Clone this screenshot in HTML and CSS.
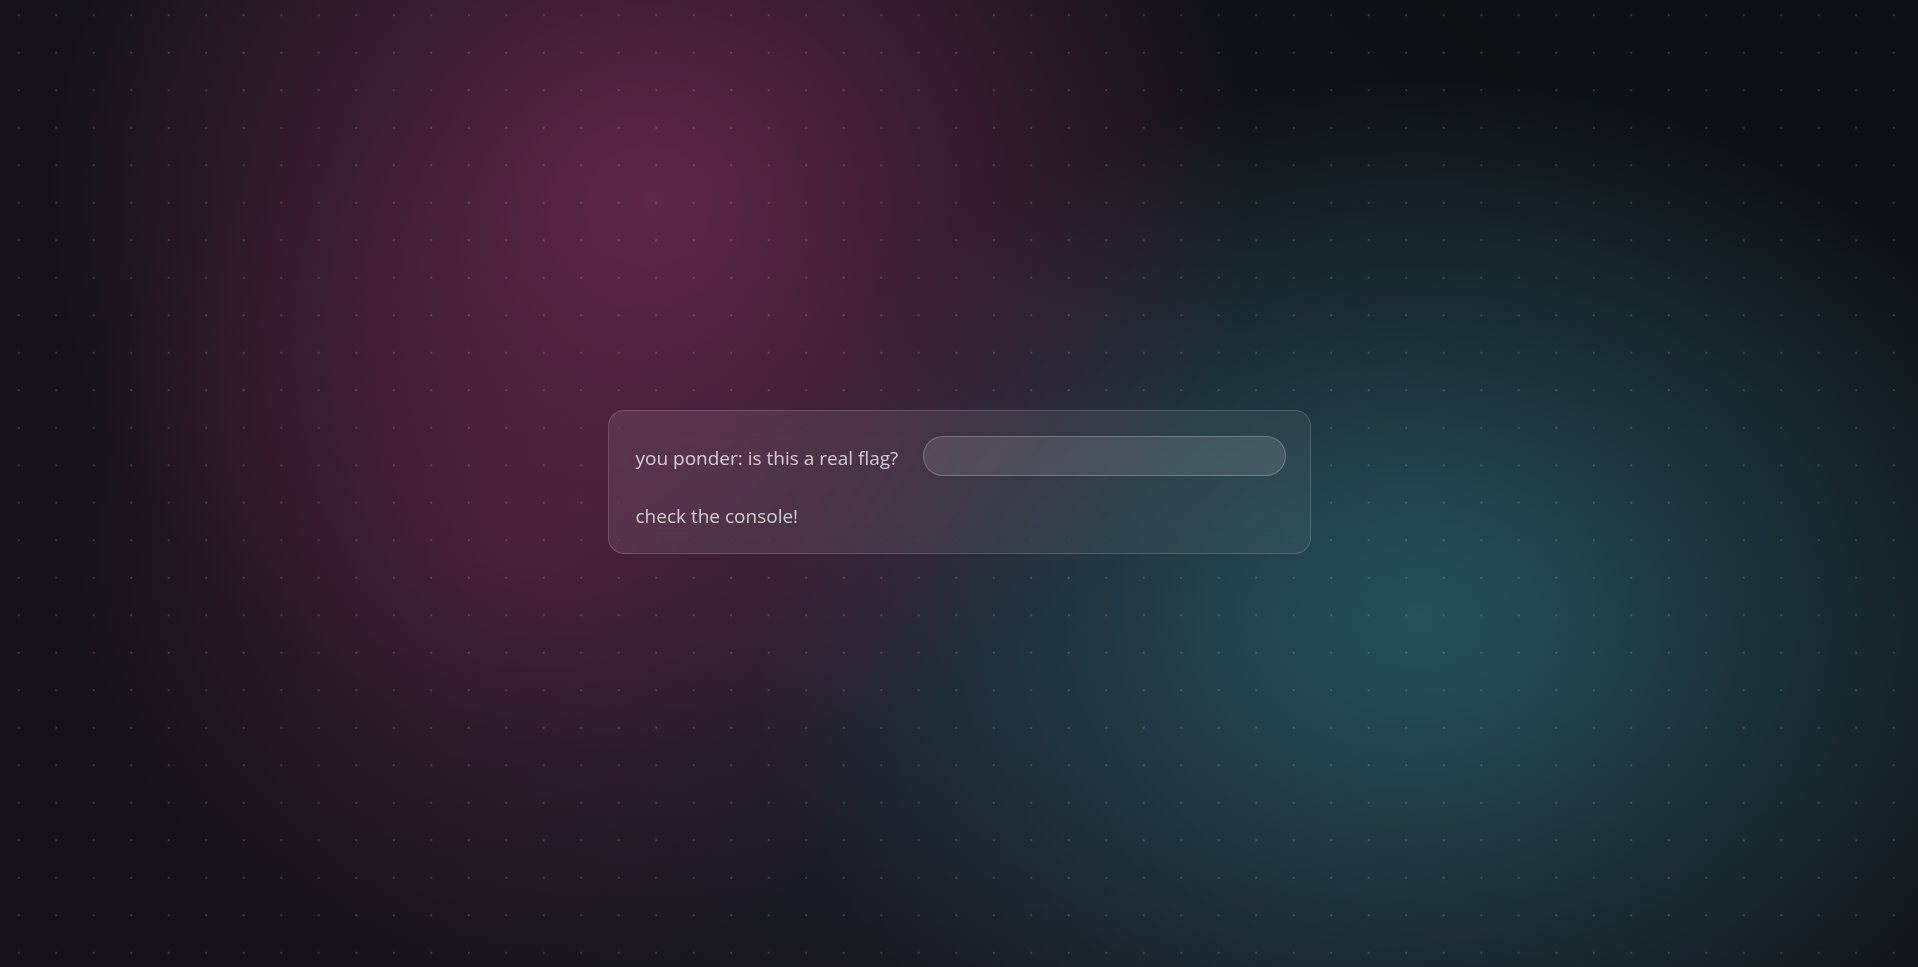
FILE: index.html
```html
<!DOCTYPE html>
<html lang="en">
<head>
<meta charset="utf-8">
<title>flag</title>
<link rel="stylesheet" href="styles.css">
</head>
<body>
<main class="card">
  <div class="row">
    <label class="prompt" for="flag">you ponder: is this a real flag?</label>
    <input class="flag-input" id="flag" type="text">
  </div>
  <p class="hint">check the console!</p>
</main>
</body>
</html>
```

FILE: styles.css
```css
html, body {
  margin: 0;
  padding: 0;
  height: 100%;
}

body {
  min-height: 100vh;
  display: flex;
  align-items: center;
  justify-content: center;
  font-family: "Open Sans", "Noto Sans", sans-serif;
  background-color: #121218;
  background-image:
    radial-gradient(circle at center, rgba(255,255,255,0.16) 0.9px, transparent 1.4px),
    radial-gradient(ellipse 600px 560px at 650px 200px, rgba(94,38,72,1), rgba(94,38,72,0) 100%),
    radial-gradient(ellipse 460px 440px at 520px 540px, rgba(82,34,62,0.65), rgba(82,34,62,0) 100%),
    radial-gradient(ellipse 680px 540px at 1420px 620px, rgba(38,80,92,1), rgba(38,80,92,0) 100%),
    radial-gradient(ellipse 700px 500px at 950px 700px, rgba(32,34,48,0.8), rgba(32,34,48,0) 100%),
    linear-gradient(225deg, #0d1014 0%, #141419 50%, #17121a 100%);
  background-size: 37.5px 37.5px, 100% 100%, 100% 100%, 100% 100%, 100% 100%, 100% 100%;
  background-position: 0 -3.5px, 0 0, 0 0, 0 0, 0 0, 0 0;
}

.card {
  box-sizing: border-box;
  width: 703px;
  margin-bottom: 3px;
  padding: 25px 24px 24px 24px;
  border: 1px solid rgba(255,255,255,0.16);
  border-radius: 16px;
  background: linear-gradient(120deg, rgba(255,255,255,0.09), rgba(255,255,255,0.06));
  backdrop-filter: blur(12px);
  color: rgba(255,255,255,0.74);
  font-size: 19px;
}

.row {
  display: flex;
  align-items: center;
  gap: 25px;
}

.prompt {
  padding: 4px 0 0 3px;
  white-space: nowrap;
}

.flag-input {
  flex: 1;
  height: 40px;
  box-sizing: border-box;
  border: 1px solid rgba(255,255,255,0.22);
  border-radius: 20px;
  background: rgba(255,255,255,0.1);
  outline: none;
  color: #fff;
  font: inherit;
  padding: 0 16px;
}

.hint {
  margin: 28px 0 0 0;
  padding-left: 3px;
  line-height: 25px;
}
```
